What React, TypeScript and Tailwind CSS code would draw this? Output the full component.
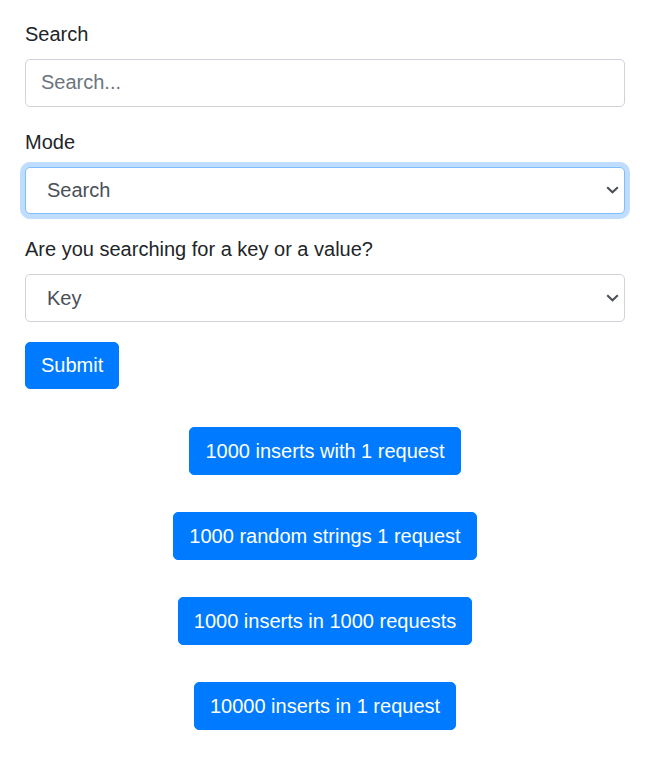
import React from 'react';

const actions = [
  '1000 inserts with 1 request',
  '1000 random strings 1 request',
  '1000 inserts in 1000 requests',
  '10000 inserts in 1 request',
];

const Chevron = () => (
  <svg
    className="absolute right-[6px] top-1/2 -translate-y-1/2 pointer-events-none"
    width="13"
    height="8"
    viewBox="0 0 13 8"
    fill="none"
  >
    <path d="M1.2 1.2 L6.5 6.3 L11.8 1.2" stroke="#4a4f55" strokeWidth="2" />
  </svg>
);

const Select = ({ value, options, focused }: { value: string; options: string[]; focused?: boolean }) => (
  <div className="relative">
    <select
      defaultValue={value}
      className={
        focused
          ? 'block w-full h-[47.5px] pl-[21px] pr-[30px] appearance-none border border-[#80bdff] rounded-[5px] text-[#495057] bg-white outline-none shadow-[0_0_0_5px_rgba(0,123,255,0.25)]'
          : 'block w-full h-[47.5px] pl-[21px] pr-[30px] appearance-none border border-[#ced4da] rounded-[5px] text-[#495057] bg-white outline-none'
      }
    >
      {options.map((o) => (
        <option key={o}>{o}</option>
      ))}
    </select>
    <Chevron />
  </div>
);

const App = () => {
  return (
    <div className="min-h-screen bg-white text-[#212529] text-[20px] leading-[30px] font-['Liberation_Sans',Arial,sans-serif]">
      <div className="px-[25px] pt-[19px] w-[650px]">
        <form onSubmit={(e) => e.preventDefault()}>
          <div className="mb-5">
            <label className="block mb-[10px]">Search</label>
            <input
              type="text"
              placeholder="Search..."
              className="block w-full h-[47.5px] px-[15px] border border-[#ced4da] rounded-[5px] text-[#495057] placeholder:text-[#6c757d] outline-none"
            />
          </div>
          <div className="mb-5">
            <label className="block mb-[10px]">Mode</label>
            <Select value="Search" options={['Search', 'Insert', 'Delete']} focused />
          </div>
          <div className="mb-5">
            <label className="block mb-[10px]">Are you searching for a key or a value?</label>
            <Select value="Key" options={['Key', 'Value']} />
          </div>
          <button
            type="submit"
            className="h-[47.5px] px-[15px] bg-[#007bff] border border-[#007bff] rounded-[5px] text-white"
          >
            Submit
          </button>
        </form>

        <div className="flex flex-col items-center gap-[37.5px] mt-[38px]">
          {actions.map((label) => (
            <button
              key={label}
              className="h-[47.5px] px-[15px] bg-[#007bff] border border-[#007bff] rounded-[5px] text-white"
            >
              {label}
            </button>
          ))}
        </div>
      </div>
    </div>
  );
};

export default App;
